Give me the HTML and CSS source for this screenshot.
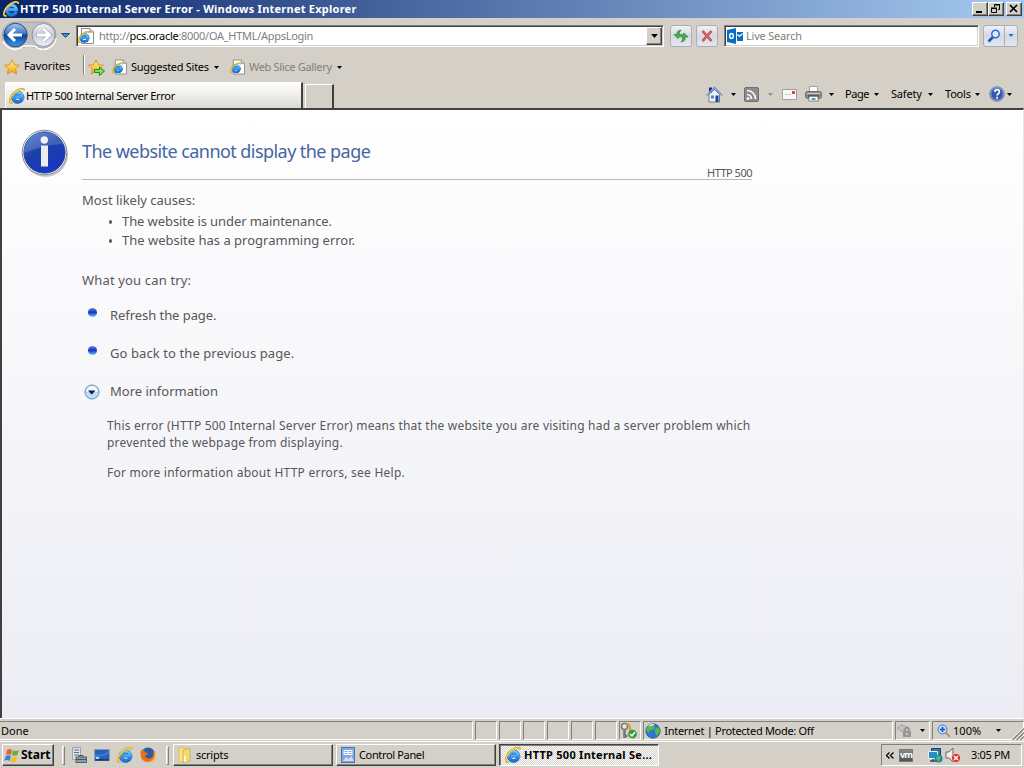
FILE: index.html
```html
<!DOCTYPE html>
<html lang="en">
<head>
  <meta charset="UTF-8" />
  <title>HTTP 500 Internal Server Error</title>
  <link rel="stylesheet" href="styles.css">
</head>
<body>

<!-- shared icons -->
<svg class="defs" width="0" height="0">
  <defs>
    <linearGradient id="ieBlue" x1="0" y1="0" x2="0" y2="1">
      <stop offset="0" stop-color="#6fd0ff"/>
      <stop offset="1" stop-color="#1a78dc"/>
    </linearGradient>
    <linearGradient id="gold" x1="0" y1="0" x2="0" y2="1">
      <stop offset="0" stop-color="#fff3a0"/>
      <stop offset="1" stop-color="#f5a40c"/>
    </linearGradient>
    <linearGradient id="navBlue" x1="0" y1="0" x2="0" y2="1">
      <stop offset="0" stop-color="#a9c8ee"/>
      <stop offset=".45" stop-color="#3b74c4"/>
      <stop offset=".5" stop-color="#0e3f98"/>
      <stop offset="1" stop-color="#3aa0f0"/>
    </linearGradient>
    <linearGradient id="navGray" x1="0" y1="0" x2="0" y2="1">
      <stop offset="0" stop-color="#f4f6fa"/>
      <stop offset=".5" stop-color="#c3c9d6"/>
      <stop offset="1" stop-color="#f2f5fb"/>
    </linearGradient>
    <linearGradient id="infoBlue" x1="0" y1="0" x2=".6" y2="1">
      <stop offset="0" stop-color="#4a78d0"/>
      <stop offset=".5" stop-color="#1b40a8"/>
      <stop offset="1" stop-color="#1c36c0"/>
    </linearGradient>
  </defs>
  <symbol id="ie" viewBox="0 0 16 16">
    <path d="M13.300 10.600A4.900 4.700 0 1 1 13.500 8.600H5.500" fill="none" stroke="#1560b8" stroke-width="3.600"/>
    <path d="M13.200 10.600A4.900 4.700 0 1 1 13.500 8.600H5.500" fill="none" stroke="url(#ieBlue)" stroke-width="2.600"/>
    <path d="M3.500 14.800C-.8 15.800 .3 9.600 5.200 4.800 9.500 .8 15.500-.6 15.300 3" fill="none" stroke="#c08c10" stroke-width="1.900"/>
    <path d="M3.500 14.800C-.8 15.800 .3 9.600 5.200 4.800 9.500 .8 15.500-.6 15.300 3" fill="none" stroke="#ffd84a" stroke-width="1.200"/>
  </symbol>
  <symbol id="iepage" viewBox="0 0 16 16">
    <path d="M3.500.5H12L15.500 4V15.500H3.500Z" fill="#fff" stroke="#8a8a8a"/>
    <path d="M12 .5V4h3.500" fill="#ddd" stroke="#8a8a8a"/>
    <use href="#ie" x="0" y="3" width="12" height="12"/>
  </symbol>
  <symbol id="star" viewBox="0 0 16 16">
    <path d="M8 .8l2.200 4.900 5.200.5-3.900 3.600 1.200 5.300L8 12.400l-4.700 2.700 1.200-5.300L.6 6.200l5.200-.5z" fill="url(#gold)" stroke="#d8921a" stroke-width=".9"/>
  </symbol>
  <symbol id="arrow" viewBox="0 0 5 3">
    <path d="M0 0H5L2.500 3Z" fill="currentColor"/>
  </symbol>
</svg>

<div class="titlebar">
  <svg class="title-icon" width="16" height="16"><use href="#ie"/></svg>
  <span class="title-text">HTTP 500 Internal Server Error - Windows Internet Explorer</span>
  <div class="window-buttons">
    <button class="win-btn"><svg width="12" height="10"><path d="M2 8h6" stroke="#000" stroke-width="2"/></svg></button>
    <button class="win-btn"><svg width="12" height="10" fill="none" stroke="#000"><path d="M4.500 3V.5h5v5H8M4 1h6M1.500 4.500h5v4h-5zM1 4h6"/></svg></button>
    <button class="win-btn close-btn"><svg width="12" height="10"><path d="M2 1l7 7M9 1L2 8" stroke="#000" stroke-width="1.700"/></svg></button>
  </div>
</div>

<div class="navbar">
  <svg class="nav-buttons" width="72" height="30" viewBox="0 0 72 30">
    <path d="M15 2H43a13 13 0 0 1 13 13 13 13 0 0 1-13 13Q35 28 29 26 23 28 15 28A13 13 0 0 1 15 2Z" fill="#c0c0c2" stroke="#aaa8a4"/>
    <path d="M3 21a13 13 0 0 0 20 5.500q6-1.500 12 0a13 13 0 0 0 21-8" fill="none" stroke="#fff" stroke-width="1.500"/>
    <circle cx="15.500" cy="15" r="11.700" fill="url(#navBlue)" stroke="#24477e"/>
    <path d="M9 15h13M15 9l-6 6 6 6" fill="none" stroke="#fff" stroke-width="3"/>
    <circle cx="43.500" cy="15" r="11.500" fill="url(#navGray)" stroke="#8c929c"/>
    <path d="M36.500 15h13M43.500 9l6 6-6 6" fill="none" stroke="#a3a9b4" stroke-width="4"/>
    <path d="M37 15h12M43.500 9l6 6-6 6" fill="none" stroke="#fff" stroke-width="2.800"/>
    <path d="M61.500 13.500h8l-4 4z" fill="#3d8fd0" stroke="#164a80"/>
  </svg>
  <div class="address">
    <svg class="address-icon" width="16" height="16"><use href="#iepage"/></svg>
    <span class="url">http://<b>pcs.oracle</b>:8000/OA_HTML/AppsLogin</span>
    <button class="address-drop"><svg width="7" height="4"><use href="#arrow"/></svg></button>
  </div>
  <button class="tool-btn refresh">
    <svg width="16" height="16"><path d="M8 2Q3.500 2.500 3.800 6.500H1l4 4 3.500-4H6.200Q6 4 8 2Z" fill="#48b048" stroke="#1c7a22" stroke-width=".6"/><path d="M8 14q4.500-.5 4.200-5H15l-4-4-3.500 4h2.300q.2 3-1.800 5Z" fill="#48b048" stroke="#1c7a22" stroke-width=".6"/></svg>
  </button>
  <button class="tool-btn stop">
    <svg width="16" height="16"><path d="M3.500 3l9 10M12.500 3l-9 10" stroke="#a83a3a" stroke-width="2.600"/><path d="M3.500 3l9 10M12.500 3l-9 10" stroke="#d86868" stroke-width="1.500"/></svg>
  </button>
  <div class="search">
    <svg width="16" height="16"><path d="M0 2l9-2v16l-9-2z" fill="#0a6cc0"/><path d="M10 4h6v9h-6z" fill="#0a6cc0"/><path d="M10.500 6.500l2 2 3-3" fill="none" stroke="#fff" stroke-width="1.200"/><ellipse cx="4.500" cy="8" rx="1.800" ry="2.400" fill="none" stroke="#fff" stroke-width="1.500"/></svg>
    <span class="search-text">Live Search</span>
  </div>
  <div class="search-btns">
    <button class="tool-btn go"><svg width="14" height="14"><path d="M1.500 12.500l5-5" stroke="#1c4fc0" stroke-width="2.500"/><circle cx="8.500" cy="5" r="3.700" fill="#d8ecff" stroke="#2a66dc" stroke-width="1.500"/></svg></button>
    <button class="tool-btn go-drop"><svg width="6" height="3"><use href="#arrow"/></svg></button>
  </div>
</div>

<div class="favbar">
  <svg class="fav-star" width="16" height="16"><use href="#star"/></svg>
  <span class="fav-label">Favorites</span>
  <div class="fav-sep"></div>
  <svg class="fav-add" width="17" height="17"><use href="#star" width="16" height="16"/><path d="M6.500 10.500h5V8l5 4-5 4.500v-3h-5z" fill="#7ee05a" stroke="#1d8a1d"/></svg>
  <svg class="fav-page" width="15" height="16"><use href="#iepage"/></svg>
  <span class="sites-label">Suggested Sites</span>
  <svg class="drop" width="5" height="3"><use href="#arrow"/></svg>
  <svg class="fav-page slice" width="15" height="16"><use href="#iepage"/></svg>
  <span class="slice-label">Web Slice Gallery</span>
  <svg class="drop" width="5" height="3"><use href="#arrow"/></svg>
</div>

<div class="tabbar">
  <div class="tab">
    <svg width="16" height="16"><use href="#ie"/></svg>
    <span class="tab-text">HTTP 500 Internal Server Error</span>
  </div>
  <div class="new-tab"></div>
  <div class="commands">
    <svg class="home" width="17" height="17"><path d="M3 1.500h3V7H3z" fill="#1a2c9c"/><path d="M3 8.500l5.500-5 5 5v7.500H3z" fill="#eef2fa" stroke="#6c7890"/><path d="M.7 9.500L8.500 1.500l7.800 8" fill="none" stroke="#7c98cc" stroke-width="1.700"/><path d="M9.500 9.500h3V16h-3z" fill="#17479c"/><path d="M5 9.500h3v3H5z" fill="#4c88b8"/></svg>
    <svg class="drop home-drop" width="5" height="3"><use href="#arrow"/></svg>
    <svg class="rss" width="15" height="15"><rect x=".5" y=".5" width="14" height="14" rx="1.500" fill="#8b8b8b" stroke="#707070"/><circle cx="4" cy="11.500" r="1.500" fill="#fff"/><path d="M3 7.500a4.500 4.500 0 0 1 4.500 4.500M3 3.500A8.500 8.500 0 0 1 11.500 12" fill="none" stroke="#fff" stroke-width="1.700"/></svg>
    <svg class="drop rss-drop" width="5" height="3"><use href="#arrow"/></svg>
    <svg class="mail" width="15" height="11"><path d="M.5.5h14v10H.5z" fill="#f8f8f8" stroke="#a0a0a0"/><path d="M3 5.500h6" stroke="#c8c8c8"/><path d="M10 2h3v3h-3z" fill="#d84a4a"/></svg>
    <svg class="printer" width="17" height="16"><path d="M4.500.5h8V7h-8z" fill="#fff" stroke="#a0a0a0"/><rect x=".5" y="5.500" width="16" height="7" rx="2" fill="#8c8c8c" stroke="#6c6c6c"/><path d="M2 7.500h13" stroke="#c8c8c8"/><path d="M3 10h11" stroke="#444" stroke-width="1.500"/><path d="M4.500 10.500h8l1 4.500h-10z" fill="#fff" stroke="#888"/><path d="M6.500 12h4v2h-4z" fill="#3ba6c8"/></svg>
    <svg class="drop print-drop" width="5" height="3"><use href="#arrow"/></svg>
    <span class="cmd page-cmd">Page</span><svg class="drop" width="5" height="3"><use href="#arrow"/></svg>
    <span class="cmd safety-cmd">Safety</span><svg class="drop" width="5" height="3"><use href="#arrow"/></svg>
    <span class="cmd tools-cmd">Tools</span><svg class="drop" width="5" height="3"><use href="#arrow"/></svg>
    <svg class="help" width="16" height="16"><circle cx="8" cy="8" r="7.300" fill="#3458b0" stroke="#7c8cac"/><circle cx="8" cy="8" r="6.300" fill="none" stroke="#b8c8ec" stroke-width=".7"/><path d="M5.700 6q.2-2.300 2.400-2.300T10.400 6q0 1-1.200 1.700T8.100 9.500M8.100 10.700v2" fill="none" stroke="#fff" stroke-width="1.700"/></svg>
    <svg class="drop help-drop" width="5" height="3"><use href="#arrow"/></svg>
  </div>
</div>

<div class="content">
  <svg class="info-icon" width="50" height="50" viewBox="0 0 50 50">
    <circle cx="25.500" cy="26.500" r="22.500" fill="#c9c9c9"/>
    <circle cx="24.500" cy="24.500" r="22.300" fill="#fff" stroke="#85888f"/>
    <circle cx="24.500" cy="24.500" r="20.700" fill="url(#infoBlue)" stroke="#24429a" stroke-width=".8"/>
    <path d="M4 25A20.500 20.500 0 0 1 43 16Q22 17 4 25Z" fill="#fff" opacity=".17"/>
    <circle cx="24.300" cy="12" r="3.700" fill="#f0f0f0"/>
    <rect x="21" y="17.500" width="7" height="21" fill="#ececec"/>
  </svg>
  <div class="error">
    <h1>The website cannot display the page</h1>
    <div class="code"><span>HTTP 500</span></div>
    <p class="causes">Most likely causes:</p>
    <ul class="cause-list">
      <li class="c1">The website is under maintenance.</li>
      <li class="c2">The website has a programming error.</li>
    </ul>
    <p class="try">What you can try:</p>
    <div class="action"><i class="ball"></i><span class="a1">Refresh the page.</span></div>
    <div class="action"><i class="ball"></i><span class="a2">Go back to the previous page.</span></div>
    <div class="action more"><svg width="16" height="16"><circle cx="8" cy="8" r="7" fill="#bcdcf8" stroke="#6c8cb8"/><path d="M2 8a6 6 0 0 1 12 0z" fill="#f0f8ff"/><path d="M4 6.500h7.500L7.700 10.500z" fill="#0a1450"/></svg><span class="a3">More information</span></div>
    <div class="details">
      <p>This error (HTTP 500 Internal Server Error) means that the website you are visiting had a server problem which<br>prevented the webpage from displaying.</p>
      <p>For more information about HTTP errors, see Help.</p>
    </div>
  </div>
</div>

<div class="statusbar">
  <div class="pane done">Done</div>
  <div class="pane small"></div>
  <div class="pane small"></div>
  <div class="pane small"></div>
  <div class="pane small"></div>
  <div class="pane small"></div>
  <div class="pane small"></div>
  <div class="pane small cert">
    <svg width="18" height="17"><circle cx="4.500" cy="4.500" r="3" fill="#e8e8e8" stroke="#777" stroke-width="1.500"/><path d="M4.500 8v8M4.500 14h3" stroke="#777" stroke-width="2.500"/><path d="M6 2q5-1 4 8" fill="none" stroke="#d89a38" stroke-width="2"/><circle cx="12.500" cy="12" r="4.300" fill="#2e9c34"/><path d="M10 12l2 2 3-4" fill="none" stroke="#fff" stroke-width="1.400"/></svg>
  </div>
  <div class="pane zone">
    <svg width="16" height="16"><circle cx="8" cy="8" r="7.200" fill="#2c78d8" stroke="#1c5494" stroke-width=".8"/><path d="M3 3q4-3 6 0T7 7 4 10 1 7zM10 6l4-2 1 5-3 4-2-3z" fill="#58b848"/><path d="M4 3q3-2 5-1" stroke="#d8f0ff" stroke-width="1.500" fill="none"/></svg>
    <span class="zone-text">Internet | Protected Mode: Off</span>
  </div>
  <div class="pane lock">
    <svg width="18" height="16"><path d="M1 5l5-4v2q7-1 6 6H9q0-3-3-2v2z" fill="#c4c4c4" stroke="#999" stroke-width=".7"/><rect x="7" y="8" width="8" height="6" fill="#969696"/><path d="M9 8V5.500q2-2 4 0V8" fill="none" stroke="#888" stroke-width="1.300"/><path d="M11 10v2" stroke="#fff"/></svg>
    <svg class="drop" width="5" height="3"><use href="#arrow"/></svg>
  </div>
  <div class="pane zoom">
    <svg width="14" height="14"><path d="M8 8l5 5" stroke="#c09060" stroke-width="2"/><circle cx="5.500" cy="5.500" r="4.500" fill="#b8dcff" stroke="#3a7ccc"/><path d="M5.500 3v5M3 5.500h5" stroke="#1c58b8" stroke-width="1.700"/></svg>
    <span class="zoom-text">100%</span>
    <svg class="drop" width="5" height="3"><use href="#arrow"/></svg>
    <svg class="grip" width="13" height="13"><path d="M0 13L13 0M4 13l9-9M8 13l5-5" stroke="#fff" stroke-width="1"/><path d="M1.500 13L13 1.500M5.500 13L13 5.500M9.500 13L13 9.500" stroke="#808080" stroke-width="1.500"/></svg>
  </div>
</div>

<div class="taskbar">
  <button class="start">
    <svg width="17" height="17"><path d="M3 3q3-2 5 0L7 8Q4 6.500 2 8z" fill="#e8622c"/><path d="M9 3q3 2 6 0l-1.500 5q-3 1.500-5.500 0z" fill="#62b040"/><path d="M2 9q2-1.500 5 0l-1.500 5q-3-2-5.500 0z" fill="#3c80d8"/><path d="M8 9.500q3 1 5.500 0L12 14.500q-3 1.500-5.500 0z" fill="#f4bc30"/></svg>
    <span>Start</span>
  </button>
  <div class="band-sep"></div>
  <div class="quick">
    <svg width="16" height="16"><path d="M1.500.5h8v12h-8z" fill="#dce2e6" stroke="#98a4ac"/><path d="M3 3h5M3 5.500h5M3 8h5" stroke="#60707c"/><rect x="5" y="10" width="10.500" height="5.500" fill="#8c9ca8" stroke="#54646c"/><path d="M8 10V8.500h4V10M5 12.500h10" fill="none" stroke="#44545c"/></svg>
    <svg width="16" height="16"><path d="M.5 2.500h15v11H.5z" fill="#2860bc" stroke="#8c9cb4"/><path d="M1 7q8 2 14-4v4L1 12z" fill="#2c80dc"/><path d="M1 13h14" stroke="#18305c" stroke-width="1.500"/><path d="M2 10h3v2H2z" fill="#b8dcf8"/></svg>
    <svg width="16" height="16"><use href="#ie"/></svg>
    <svg width="16" height="16"><circle cx="8" cy="7.500" r="7" fill="#2c5ca4"/><path d="M1 3Q-1 13 6 15 15 16 15.500 6L13.500 4Q14 11 9 11.500 4 11 6 8L8.500 7 5 5 3.500 2.500 3 4z" fill="#e87018"/><path d="M13 3q3 5 0 9-2 2.500-5 3 9 1 7.500-8z" fill="#f8b828"/></svg>
  </div>
  <div class="band-sep second"></div>
  <div class="task">
    <svg width="16" height="16"><path d="M2 1.500l6-1V15H2z" fill="#f8e488" stroke="#d8b848" stroke-width=".7"/><path d="M6 3l7-2v13l-7 1.500z" fill="#f4d878" stroke="#c8a440" stroke-width=".7"/><path d="M7 8l2 1v6H7z" fill="#fff8d0"/></svg>
    <span class="t1">scripts</span>
  </div>
  <div class="task">
    <svg width="16" height="16"><rect x="1.500" y=".5" width="13" height="15" fill="#80a8e4" stroke="#4c74b4"/><path d="M4 3.500h8v4H4z" fill="none" stroke="#fff"/><path d="M4 5.500h8M8 3v4" stroke="#fff"/><path d="M3 14l3-4 3 2 2-3 3 5z" fill="#d8dce4"/></svg>
    <span class="t2">Control Panel</span>
  </div>
  <div class="task active">
    <svg width="16" height="16"><use href="#ie"/></svg>
    <span class="t3">HTTP 500 Internal Se...</span>
  </div>
  <div class="tray">
    <svg class="chev" width="8" height="7"><path d="M3.500.5l-3 3 3 3M7.500.5l-3 3 3 3" fill="none" stroke="#000" stroke-width="1.300"/></svg>
    <div class="vm">vm</div>
    <svg class="net" width="16" height="16"><path d="M4.500 1.500h9v8h-9z" fill="#2878b4" stroke="#24405c"/><path d="M1.500 4.500h9v7h-9z" fill="#2890c0" stroke="#eee"/><path d="M3 14h7M6 12v2" stroke="#345" stroke-width="1.500"/><circle cx="11.500" cy="11.500" r="4" fill="#2478c0"/><path d="M10 8l4 2-2 5-3-3z" fill="#50c040"/></svg>
    <svg class="vol" width="16" height="16"><path d="M1 5h3l4-4v14l-4-4H1z" fill="#eee" stroke="#666"/><circle cx="11" cy="11" r="4.500" fill="#dc3030" stroke="#fff" stroke-width=".5"/><path d="M9 9l4 4M13 9l-4 4" stroke="#fff" stroke-width="1.500"/></svg>
    <span class="clock">3:05 PM</span>
  </div>
</div>

</body>
</html>
```
FILE: styles.css
```css
* {
  box-sizing: border-box;
}

body {
  margin: 0;
  width: 1024px;
  height: 768px;
  overflow: hidden;
  display: flex;
  flex-direction: column;
  background: #d4d0c8;
  font-family: "Noto Sans", sans-serif;
  font-size: 11px;
  line-height: 16px;
  color: #000;
}

svg {
  display: block;
  flex: none;
}

button {
  padding: 0;
  font: inherit;
  display: flex;
  align-items: center;
  justify-content: center;
}

span {
  white-space: nowrap;
  flex: none;
}

p, h1, ul {
  margin: 0;
  padding: 0;
}

.defs {
  position: absolute;
}

/* title bar */
.titlebar {
  height: 18px;
  display: flex;
  align-items: center;
  padding: 0 2px 0 3px;
  background: linear-gradient(to right, #0a246a, #a6caf0);
  color: #fff;
  font-weight: bold;
}

.title-text {
  margin-left: 1px;
  letter-spacing: 0.24px;
}

.window-buttons {
  display: flex;
  margin-left: auto;
}

.win-btn {
  width: 16px;
  height: 14px;
  background: #d4d0c8;
  border: 1px solid;
  border-color: #fff #404040 #404040 #fff;
  box-shadow: inset -1px -1px #808080;
}

.close-btn {
  margin-left: 2px;
}

/* address row */
.navbar {
  height: 35px;
  display: flex;
  align-items: center;
}

.nav-buttons {
  margin-top: -1px;
}

.address {
  width: 588px;
  height: 22px;
  margin-left: 4px;
  padding: 0 1px;
  display: flex;
  align-items: center;
  background: #fff;
  border: 1px solid;
  border-color: #808080 #fff #fff #808080;
  box-shadow: inset 1px 1px #404040, inset -1px -1px #d4d0c8;
}

.url {
  margin-left: 5px;
  color: #808080;
  letter-spacing: -0.29px;
}

.url b {
  font-weight: normal;
  color: #000;
}

.address-drop {
  width: 16px;
  height: 18px;
  margin-left: auto;
  background: #d4d0c8;
  border: 1px solid;
  border-color: #fff #404040 #404040 #fff;
  box-shadow: inset -1px -1px #808080;
}

.tool-btn {
  width: 22px;
  height: 22px;
  background: linear-gradient(#f0f1f5, #d6d9e2 50%, #e6e8f0);
  border: 1px solid #a9adb8;
  border-radius: 3px;
}

.refresh {
  margin-left: 6px;
}

.stop {
  margin-left: 4px;
}

.search {
  width: 255px;
  height: 22px;
  margin-left: 6px;
  padding-left: 2px;
  display: flex;
  align-items: center;
  background: #fff;
  border: 1px solid;
  border-color: #808080 #fff #fff #808080;
  box-shadow: inset 1px 1px #404040, inset -1px -1px #d4d0c8;
}

.search-text {
  margin-left: 3px;
  color: #808080;
  letter-spacing: -0.2px;
}

.search-btns {
  display: flex;
  margin-left: 4px;
}

.go {
  border-radius: 3px 0 0 3px;
}

.go-drop {
  width: 14px;
  margin-left: -1px;
  color: #1c6cc4;
  border-radius: 0 3px 3px 0;
}

/* favorites row */
.favbar {
  height: 28px;
  display: flex;
  align-items: center;
  padding-left: 4px;
}

.fav-label {
  width: 60px;
  margin: -2px 0 0 4px;
  letter-spacing: -0.1px;
}

.fav-sep {
  width: 2px;
  height: 20px;
  margin: -4px 3px 0 -1px;
  border-left: 1px solid #808080;
  border-right: 1px solid #fff;
}

.fav-page {
  margin-left: 7px;
}

.sites-label {
  width: 83px;
  margin-left: 4px;
  letter-spacing: -0.28px;
}

.slice {
  margin-left: 11px;
}

.slice-label {
  width: 88px;
  margin-left: 4px;
  color: #808080;
  letter-spacing: -0.32px;
}

/* tabs and command bar */
.tabbar {
  height: 27px;
  display: flex;
  align-items: flex-end;
  padding-left: 5px;
}

.tab {
  width: 298px;
  height: 26px;
  padding-left: 3px;
  display: flex;
  align-items: center;
  background: linear-gradient(#fff, #dddad4);
  border-top: 1px solid #fff;
  border-left: 1px solid #fff;
  border-right: 2px solid #404040;
}

.tab-text {
  margin-left: 1px;
  letter-spacing: -0.3px;
}

.new-tab {
  width: 29px;
  height: 24px;
  margin-left: 2px;
  border-top: 1px solid #fff;
  border-left: 1px solid #fff;
  border-right: 2px solid #404040;
}

.commands {
  height: 28px;
  margin-left: 372px;
  display: flex;
  align-items: center;
}

.home-drop {
  margin-left: 8px;
}

.rss {
  margin-left: 8px;
}

.rss-drop {
  margin-left: 9px;
  color: #909090;
}

.mail {
  margin-left: 9px;
}

.printer {
  margin-left: 8px;
}

.print-drop {
  margin-left: 7px;
}

.cmd {
  letter-spacing: -0.2px;
}

.page-cmd {
  width: 29px;
  margin-left: 11px;
  letter-spacing: -0.45px;
}

.safety-cmd {
  width: 37px;
  margin-left: 12px;
}

.tools-cmd {
  width: 30px;
  margin-left: 12px;
}

.help {
  margin-left: 9px;
}

.help-drop {
  margin-left: 2px;
}

/* error page */
.content {
  flex: 1;
  display: flex;
  align-items: flex-start;
  padding: 18px 0 0 18px;
  border: solid #404040;
  border-width: 2px 0 0 2px;
  border-right: 1px solid #e8e6e2;
  background: linear-gradient(#fff, #ecedf4);
  color: #575757;
  font-size: 13px;
  line-height: 20px;
}

.error {
  width: 670px;
  margin-left: 12px;
  padding-top: 11px;
}

h1 {
  color: #4465a2;
  font-size: 18px;
  font-weight: normal;
  line-height: 24px;
  letter-spacing: -0.56px;
}

.code {
  height: 17px;
  padding-top: 3px;
  border-bottom: 1px solid #b6bac0;
  display: flex;
  justify-content: flex-end;
  font-size: 11px;
  line-height: 14px;
  letter-spacing: -0.5px;
}

.causes {
  margin-top: 10px;
}

.cause-list {
  list-style: none;
}

.cause-list li {
  height: 19px;
  padding-left: 40px;
  background: radial-gradient(circle at 28.500px 11px, #606060 1.500px, transparent 2px);
}

.cause-list .c1 {
  margin-top: 1px;
  letter-spacing: -0.09px;
}

.try {
  margin-top: 21px;
  letter-spacing: 0.16px;
}

.action {
  height: 20px;
  margin-top: 18px;
  padding-left: 6px;
  display: flex;
  align-items: center;
}

.try + .action {
  margin-top: 15px;
}

.a1 {
  letter-spacing: -0.06px;
}

.a2 {
  letter-spacing: 0.09px;
}

.ball {
  width: 9px;
  height: 9px;
  margin: -6px 13px 0 0;
  border-radius: 50%;
  background: linear-gradient(#6c8ce0, #1434b8 45%, #2c50d0 60%, #70d0f8);
}

.more {
  padding-left: 2px;
}

.more svg {
  margin: 2px 10px 0 0;
}

.details {
  padding: 16px 0 0 25px;
  font-size: 12px;
  line-height: 17px;
  letter-spacing: 0.2px;
  white-space: nowrap;
}

.details p + p {
  margin-top: 13px;
  letter-spacing: 0.24px;
}

/* status bar */
.statusbar {
  height: 23px;
  padding-top: 2px;
  display: flex;
  gap: 2px;
  border-top: 1px solid #fff;
}

.pane {
  height: 19px;
  display: flex;
  align-items: center;
  border: 1px solid;
  border-color: #808080 #fff #fff #808080;
}

.done {
  width: 474px;
  border-left: 0;
  padding-left: 1px;
}

.small {
  width: 22px;
}

.zone {
  width: 250px;
  padding-left: 1px;
}

.zone-text {
  margin-left: 3px;
  letter-spacing: -0.3px;
}

.lock {
  width: 35px;
}

.lock .drop {
  margin-left: 6px;
}

.zoom {
  width: 92px;
  padding-left: 4px;
}

.zoom-text {
  width: 43px;
  margin-left: 2px;
}

.grip {
  margin: 5px 0 0 10px;
}

/* taskbar */
.taskbar {
  height: 27px;
  padding: 2px 2px 0;
  display: flex;
  align-items: flex-start;
  border-top: 1px solid #fff;
}

.start {
  width: 52px;
  height: 22px;
  padding-left: 1px;
  justify-content: flex-start;
  background: #d4d0c8;
  border: 1px solid;
  border-color: #fff #404040 #404040 #fff;
  box-shadow: inset -1px -1px #808080;
  font-size: 12px;
  font-weight: bold;
}

.band-sep {
  width: 3px;
  height: 19px;
  margin: 2px 0 0 8px;
  border: 1px solid;
  border-color: #fff #808080 #808080 #fff;
}

.second {
  margin-left: 10px;
}

.quick {
  display: flex;
  gap: 7px;
  margin: 3px 0 0 6px;
}

.task {
  width: 160px;
  height: 22px;
  margin-left: 3px;
  padding-left: 3px;
  display: flex;
  align-items: center;
  border: 1px solid;
  border-color: #fff #404040 #404040 #fff;
  box-shadow: inset -1px -1px #808080;
}

.second + .task {
  margin-left: 4px;
}

.task span {
  margin-left: 3px;
}

.t1 {
  letter-spacing: -0.25px;
}

.t2 {
  letter-spacing: -0.35px;
}

.t3 {
  letter-spacing: 0.26px;
}

.active {
  padding-left: 5px;
  background: repeating-conic-gradient(#fff 0 25%, #d4d0c8 0 50%) 0 0 / 2px 2px;
  border-color: #404040 #fff #fff #404040;
  box-shadow: inset 1px 1px #808080;
  font-weight: bold;
}

.tray {
  width: 141px;
  height: 22px;
  margin-left: auto;
  padding-left: 4px;
  display: flex;
  align-items: center;
  border: 1px solid;
  border-color: #808080 #fff #fff #808080;
}

.vm {
  width: 14px;
  height: 13px;
  margin-left: 5px;
  background: linear-gradient(#888, #505050);
  border: 1px solid #777;
  color: #fff;
  font-size: 9px;
  font-weight: bold;
  line-height: 9px;
  text-align: center;
  letter-spacing: -1px;
}

.net {
  margin-left: 14px;
}

.vol {
  margin-left: 2px;
}

.clock {
  margin-left: 10px;
  letter-spacing: -0.35px;
}
```
